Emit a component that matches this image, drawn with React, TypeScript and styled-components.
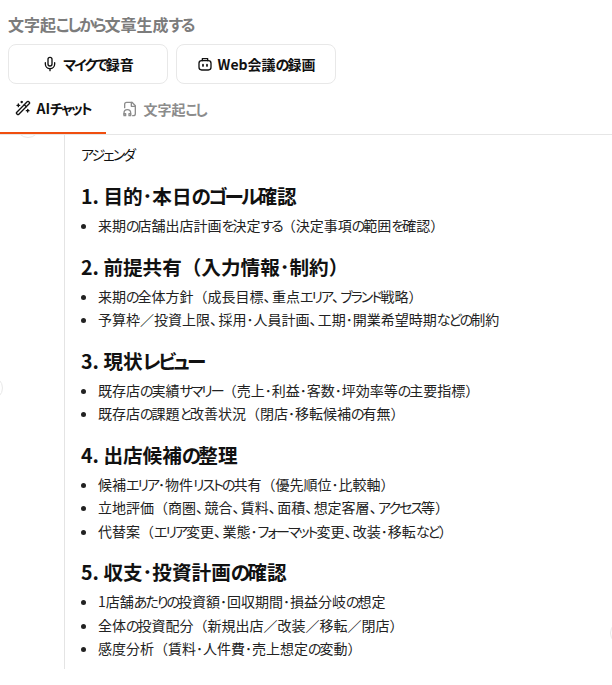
import { Mic, WandSparkles } from 'lucide-react';
import styled, { createGlobalStyle } from 'styled-components';

const GlobalStyle = createGlobalStyle`
  html, body {
    margin: 0;
    padding: 0;
    background: #fff;
  }
  body {
    font-family: "Noto Sans CJK JP", "Noto Sans", sans-serif;
    text-spacing-trim: space-all;
    color: #111;
  }
`;

const Page = styled.div`
  position: relative;
  width: 612px;
  height: 685px;
  overflow: hidden;
`;

const Top = styled.div`
  padding: 14px 8px 0;
`;

const Title = styled.div`
  font-size: 16px;
  line-height: 20px;
  font-weight: 700;
  color: #7c7c7c;
`;

const ButtonRow = styled.div`
  display: flex;
  gap: 8px;
  margin-top: 10px;
`;

const RecordButton = styled.button`
  display: flex;
  align-items: center;
  justify-content: center;
  gap: 5px;
  width: 160px;
  height: 40px;
  padding: 0;
  border: 1px solid #e8e8e8;
  border-radius: 8px;
  background: #fff;
  font: 700 14px "Noto Sans CJK JP", sans-serif;
  color: #111;
`;

const Tabs = styled.div`
  position: relative;
  z-index: 1;
  display: flex;
  height: 50px;
  background: #fff;
  border-bottom: 1px solid #e6e6e6;
`;

const Tab = styled.div<{ $active?: boolean }>`
  display: flex;
  align-items: center;
  justify-content: center;
  gap: 5px;
  width: ${(p) => (p.$active ? 106 : 116)}px;
  height: 50px;
  box-sizing: border-box;
  border-bottom: ${(p) => (p.$active ? '2px solid #f04e0f' : 'none')};
  font-size: 14px;
  font-weight: 700;
  color: ${(p) => (p.$active ? '#111' : '#8c8c8c')};
`;

const Body = styled.div`
  margin-left: 64px;
  height: 525px;
  padding: 9px 0 0 16px;
  border-left: 1px solid #e4e4e4;
  overflow: hidden;
`;

const Lead = styled.p`
  margin: 0 0 17px;
  font-size: 14px;
  line-height: 20px;
`;

const Heading = styled.h3`
  position: relative;
  top: 1px;
  margin: 0 0 6px;
  font-size: 19.6px;
  line-height: 27px;
  font-weight: 700;
`;

const List = styled.ul`
  margin: 0 0 14px;
  padding: 0 0 0 17px;
`;

const Item = styled.li`
  font-size: 14px;
  line-height: 23.5px;
  color: #222;
`;

const Kana = styled.span`
  font-feature-settings: "palt";
  letter-spacing: -0.14em;
`;

const Comma = styled.span`
  letter-spacing: -0.4em;
`;

const EdgeCircle = styled.div<{ $x: number; $y: number }>`
  position: absolute;
  left: ${(p) => p.$x}px;
  top: ${(p) => p.$y}px;
  width: 24px;
  height: 24px;
  box-sizing: border-box;
  border: 1px solid #e8e8e8;
  border-radius: 50%;
  background: #fff;
`;

const Icon = styled.svg`
  flex: none;
`;

// the reference font has much narrower kana than kanji
const Jp = ({ text }: { text: string }) => (
  <span>
    {text.split(/(、|[\u3040-\u30ff]+)/).map((part, i) => {
      if (i % 2 === 0) return part;
      const key = part + i;
      return part === '、' ? <Comma key={key}>{part}</Comma> : <Kana key={key}>{part}</Kana>;
    })}
  </span>
);

const sections = [
  {
    title: '1. 目的･本日のゴール確認',
    items: ['来期の店舗出店計画を決定する（決定事項の範囲を確認）'],
  },
  {
    title: '2. 前提共有（入力情報･制約）',
    items: [
      '来期の全体方針（成長目標、重点エリア、ブランド戦略）',
      '予算枠／投資上限、採用･人員計画、工期･開業希望時期などの制約',
    ],
  },
  {
    title: '3. 現状レビュー',
    items: [
      '既存店の実績サマリー（売上･利益･客数･坪効率等の主要指標）',
      '既存店の課題と改善状況（閉店･移転候補の有無）',
    ],
  },
  {
    title: '4. 出店候補の整理',
    items: [
      '候補エリア･物件リストの共有（優先順位･比較軸）',
      '立地評価（商圏、競合、賃料、面積、想定客層、アクセス等）',
      '代替案（エリア変更、業態･フォーマット変更、改装･移転など）',
    ],
  },
  {
    title: '5. 収支･投資計画の確認',
    items: [
      '1店舗あたりの投資額･回収期間･損益分岐の想定',
      '全体の投資配分（新規出店／改装／移転／閉店）',
      '感度分析（賃料･人件費･売上想定の変動）',
    ],
  },
];

const App = () => (
  <Page>
    <GlobalStyle />
    <Top>
      <Title><Jp text="文字起こしから文章生成する" /></Title>
      <ButtonRow>
        <RecordButton>
          <Mic size={16} />
          <Jp text="マイクで録音" />
        </RecordButton>
        <RecordButton>
          <Icon width="16" height="16" viewBox="0 0 24 24" fill="none" stroke="currentColor" strokeWidth="2" strokeLinecap="round" strokeLinejoin="round">
            <path d="M8 7V4h8v3" />
            <rect x="3" y="7" width="18" height="14" rx="4" />
            <path d="M9 13v2M15 13v2" strokeWidth="2.6" />
          </Icon>
          <Jp text="Web会議の録画" />
        </RecordButton>
      </ButtonRow>
    </Top>
    <Tabs>
      <Tab $active>
        <WandSparkles size={16} />
        <Jp text="AIチャット" />
      </Tab>
      <Tab>
        <Icon width="16" height="16" viewBox="0 0 24 24" fill="none" stroke="currentColor" strokeWidth="2" strokeLinecap="round" strokeLinejoin="round">
          <path d="M4 10V5a3 3 0 0 1 3-3h8l5 5v12a3 3 0 0 1-3 3h-1" />
          <path d="M14 2v6h6" />
          <path d="M3 20v-2a5 5 0 0 1 10 0v2" />
          <path d="M3 19h2.5v3H3zM10.5 19H13v3h-2.5z" />
        </Icon>
        <Jp text="文字起こし" />
      </Tab>
    </Tabs>
    <EdgeCircle $x={16} $y={114} />
    <EdgeCircle $x={-21} $y={376} />
    <EdgeCircle $x={610} $y={621} />
    <Body>
      <Lead><Jp text="アジェンダ" /></Lead>
      {sections.map((s) => (
        <div key={s.title}>
          <Heading><Jp text={s.title} /></Heading>
          <List>
            {s.items.map((i) => (
              <Item key={i}><Jp text={i} /></Item>
            ))}
          </List>
        </div>
      ))}
    </Body>
  </Page>
);

export default App;
